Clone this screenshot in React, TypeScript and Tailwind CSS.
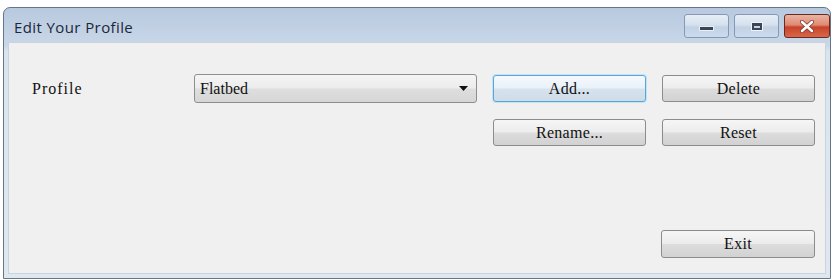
import React from "react";

const serif = { fontFamily: '"Liberation Serif", "Times New Roman", serif' };

function Btn({ label, w = 153, h = 27, focused = false }: { label: string; w?: number; h?: number; focused?: boolean }) {
  return (
    <div
      className={
        "flex items-center justify-center rounded-[3px] border text-[16px] text-[#111111] " +
        (focused
          ? "border-[#5aa7d6] shadow-[0_0_0_1px_#bfe3f7] bg-[linear-gradient(#f4f9fd_0%,#e9f1f8_48%,#d6e3ee_52%,#cfdbe7_100%)]"
          : "border-[#8c8c8c] bg-[linear-gradient(#f6f6f6_0%,#ececec_48%,#dcdcdc_52%,#d2d2d2_100%)]")
      }
      style={{ width: w, height: h, ...serif }}
    >
      <span className="tracking-[0.3px]">{label}</span>
    </div>
  );
}

export default function App() {
  return (
    <div className="w-[834px] h-[279px] bg-white pt-[7px] pl-[3px] overflow-hidden">
      <div className="w-[828px] h-[272px] border border-[#687585] rounded-t-[7px] bg-[linear-gradient(#b8c9df_0%,#c9d7e8_14%,#dae4ef_16%,#dfe8f1_100%)] flex flex-col">
        {/* Title bar */}
        <div className="h-[34px] flex items-start relative">
          <div
            className="pl-[10px] pt-[8px] text-[15px] text-[#1c2738] tracking-[0.4px]"
            style={{ fontFamily: '"Open Sans", "Noto Sans", sans-serif' }}
          >
            Edit Your Profile
          </div>
          <div className="ml-auto mt-[6px] mr-[0px] flex gap-[5px]">
            <div className="w-[45px] h-[24px] rounded-[3px] border border-[#8799b2] bg-[linear-gradient(#e6eef7_0%,#d5e1ee_45%,#c2d2e5_55%,#ccdbec_100%)] flex items-end justify-center pb-[6px]">
              <div className="w-[13px] h-[3px] bg-[#3a4656] border border-[#e8eef5] box-content" />
            </div>
            <div className="w-[45px] h-[24px] rounded-[3px] border border-[#8799b2] bg-[linear-gradient(#e6eef7_0%,#d5e1ee_45%,#c2d2e5_55%,#ccdbec_100%)] flex items-center justify-center">
              <div className="w-[10px] h-[7px] border-[2px] border-[#3a4656] border-t-[3px] outline outline-1 outline-[#eef3f8]" />
            </div>
            <div className="w-[46px] h-[24px] rounded-[3px] border border-[#6a2a22] bg-[linear-gradient(#eab3a3_0%,#df8b73_45%,#c8432a_55%,#d8674a_100%)] flex items-center justify-center">
              <svg width="14" height="13" viewBox="0 0 14 13">
                <path d="M2 2 L12 11 M12 2 L2 11" stroke="#7a3a30" strokeWidth="4.2" strokeLinecap="round" />
                <path d="M2 2 L12 11 M12 2 L2 11" stroke="#ffffff" strokeWidth="2.6" strokeLinecap="round" />
              </svg>
            </div>
          </div>
        </div>
        {/* Client area */}
        <div className="flex-1 mx-[4px] mb-[4px] bg-[#f0f0f0] border border-[#c9d3de] flex flex-col pt-[31px] pr-[10px] pb-[15px]">
          <div className="flex items-center h-[29px]">
            <div className="w-[185px] pl-[23px] text-[16px] text-[#111111] tracking-[1px]" style={serif}>
              Profile
            </div>
            <div
              className="w-[283px] h-[29px] rounded-[3px] border border-[#8e8e8e] bg-[linear-gradient(#f5f5f5_0%,#ececec_48%,#dedede_52%,#d6d6d6_100%)] flex items-center pl-[5px] pr-[8px] text-[16px] text-[#111111]"
              style={serif}
            >
              <span className="flex-1">Flatbed</span>
              <svg width="9" height="5" viewBox="0 0 9 5">
                <path d="M0 0 H9 L4.5 5 Z" fill="#111" />
              </svg>
            </div>
            <div className="ml-[16px] flex gap-[16px]">
              <Btn label="Add..." focused />
              <Btn label="Delete" />
            </div>
          </div>
          <div className="flex justify-end gap-[16px] mt-[16px]">
            <Btn label="Rename..." />
            <Btn label="Reset" />
          </div>
          <div className="flex-1" />
          <div className="flex justify-end">
            <Btn label="Exit" w={154} h={28} />
          </div>
        </div>
      </div>
    </div>
  );
}
